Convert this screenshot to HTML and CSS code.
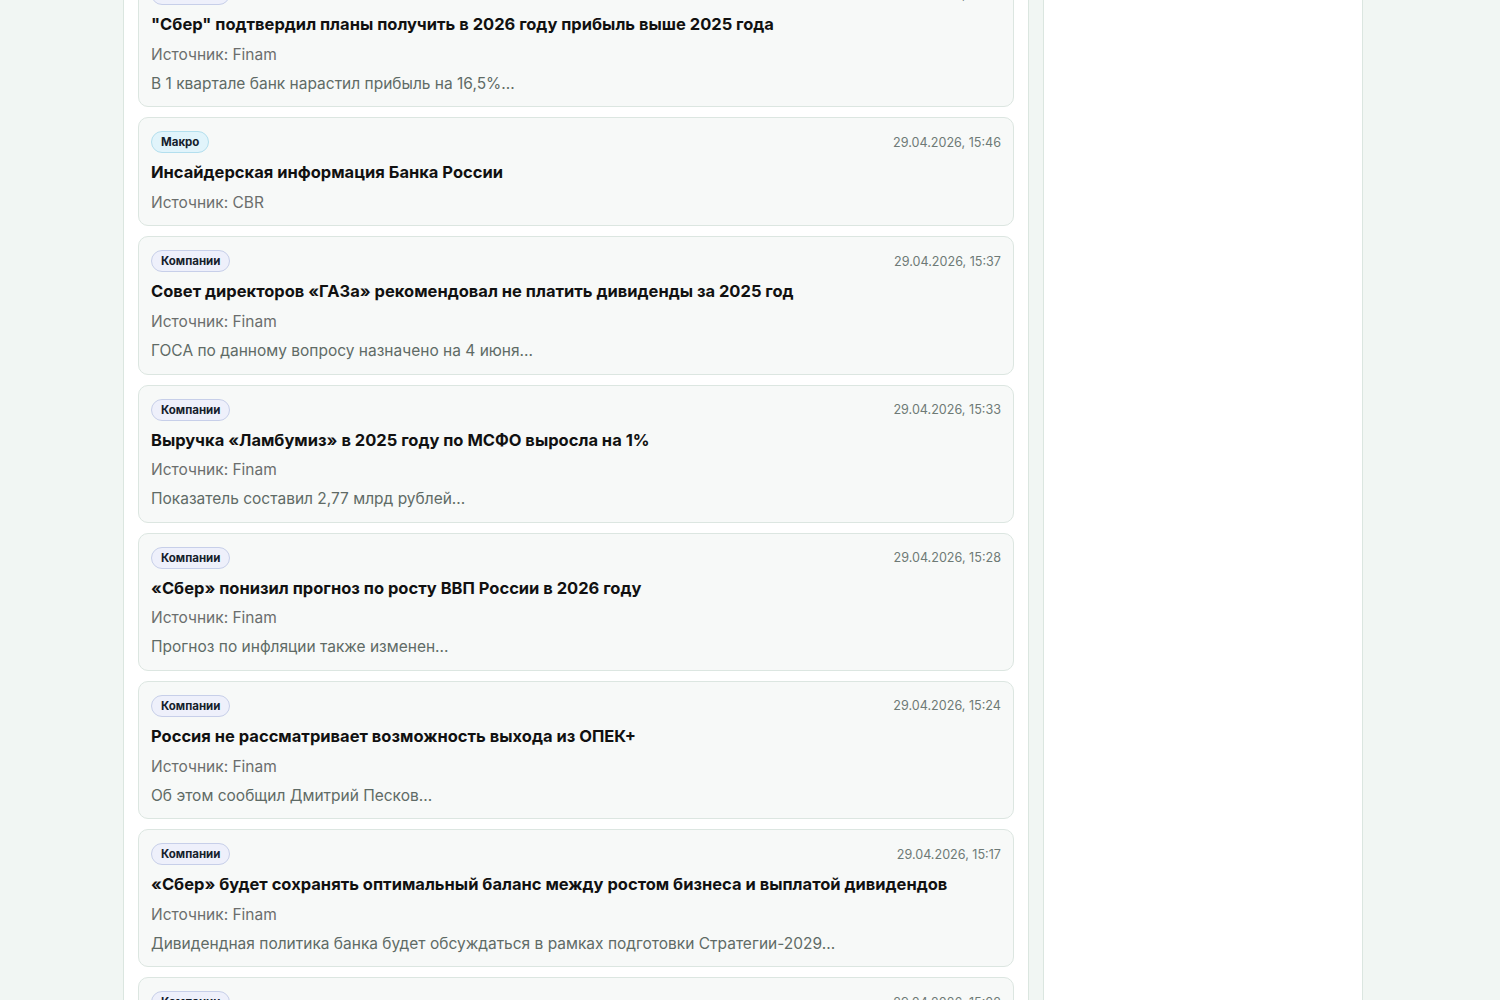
FILE: index.html
```html
<!DOCTYPE html>
<html lang="ru">
<head>
  <meta charset="UTF-8">
  <meta name="viewport" content="width=device-width, initial-scale=1.0">
  <title>Новости</title>
  <link rel="stylesheet" href="styles.css">
</head>
<body>

  <div class="layout">
    <main class="feed">
      <div class="news-list">

        <div class="news-card">
          <div class="news-head">
            <span class="tag tag-companies">Компании</span>
            <span class="news-date">29.04.2026, 15:52</span>
          </div>
          <div class="news-title">"Сбер" подтвердил планы получить в 2026 году прибыль выше 2025 года</div>
          <div class="news-source">Источник: Finam</div>
          <div class="news-text">В 1 квартале банк нарастил прибыль на 16,5%...</div>
        </div>

        <div class="news-card">
          <div class="news-head">
            <span class="tag tag-macro">Макро</span>
            <span class="news-date">29.04.2026, 15:46</span>
          </div>
          <div class="news-title">Инсайдерская информация Банка России</div>
          <div class="news-source">Источник: CBR</div>
        </div>

        <div class="news-card">
          <div class="news-head">
            <span class="tag tag-companies">Компании</span>
            <span class="news-date">29.04.2026, 15:37</span>
          </div>
          <div class="news-title">Совет директоров «ГАЗа» рекомендовал не платить дивиденды за 2025 год</div>
          <div class="news-source">Источник: Finam</div>
          <div class="news-text">ГОСА по данному вопросу назначено на 4 июня...</div>
        </div>

        <div class="news-card">
          <div class="news-head">
            <span class="tag tag-companies">Компании</span>
            <span class="news-date">29.04.2026, 15:33</span>
          </div>
          <div class="news-title">Выручка «Ламбумиз» в 2025 году по МСФО выросла на 1%</div>
          <div class="news-source">Источник: Finam</div>
          <div class="news-text">Показатель составил 2,77 млрд рублей...</div>
        </div>

        <div class="news-card">
          <div class="news-head">
            <span class="tag tag-companies">Компании</span>
            <span class="news-date">29.04.2026, 15:28</span>
          </div>
          <div class="news-title">«Сбер» понизил прогноз по росту ВВП России в 2026 году</div>
          <div class="news-source">Источник: Finam</div>
          <div class="news-text">Прогноз по инфляции также изменен...</div>
        </div>

        <div class="news-card">
          <div class="news-head">
            <span class="tag tag-companies">Компании</span>
            <span class="news-date">29.04.2026, 15:24</span>
          </div>
          <div class="news-title">Россия не рассматривает возможность выхода из ОПЕК+</div>
          <div class="news-source">Источник: Finam</div>
          <div class="news-text">Об этом сообщил Дмитрий Песков...</div>
        </div>

        <div class="news-card">
          <div class="news-head">
            <span class="tag tag-companies">Компании</span>
            <span class="news-date">29.04.2026, 15:17</span>
          </div>
          <div class="news-title">«Сбер» будет сохранять оптимальный баланс между ростом бизнеса и выплатой дивидендов</div>
          <div class="news-source">Источник: Finam</div>
          <div class="news-text">Дивидендная политика банка будет обсуждаться в рамках подготовки Стратегии-2029...</div>
        </div>

        <div class="news-card">
          <div class="news-head">
            <span class="tag tag-companies">Компании</span>
            <span class="news-date">29.04.2026, 15:02</span>
          </div>
          <div class="news-title">Чистая прибыль «Сбера» по МСФО в 1 квартале выросла</div>
          <div class="news-source">Источник: Finam</div>
          <div class="news-text">Рентабельность капитала составила 23%...</div>
        </div>

      </div>
    </main>

    <aside class="sidebar"></aside>
  </div>

</body>
</html>
```

FILE: styles.css
```css
body {
  font-family: Inter, "Noto Sans", Arial, sans-serif;
  background-color: #f1f6f3;
  margin: 0;
  height: 100vh;
  overflow: hidden;
}
.layout {
  display: flex;
  align-items: stretch;
  gap: 14px;
  padding-left: 123px;
  margin-top: -31px;
  height: calc(100vh + 31px);
}
.feed {
  width: 876px;
  padding: 0 14px;
  background-color: #fff;
  border-left: 1px solid #dbe6e0;
  border-right: 1px solid #dbe6e0;
  overflow: hidden;
}
.sidebar {
  width: 318px;
  background-color: #fff;
  border-left: 1px solid #dbe6e0;
  border-right: 1px solid #dbe6e0;
}
.news-list {
  display: flex;
  flex-direction: column;
  gap: 10px;
}
.news-card {
  background-color: #f7f9f8;
  border: 1px solid #dce6e1;
  border-radius: 10px;
  padding: 12px 12px 11.6px;
}
.news-head {
  display: flex;
  justify-content: space-between;
  align-items: center;
  height: 24px;
}
.tag {
  font-size: 11.5px;
  font-weight: 700;
  color: #15202b;
  padding: 2px 9px;
  line-height: 16px;
  border-radius: 11px;
  border: 1px solid;
}
.tag-companies {
  background-color: #eef0fb;
  border-color: #c7cfe9;
}
.tag-macro {
  background-color: #e1f4fb;
  border-color: #b3dfee;
}
.news-date {
  font-size: 12.6px;
  color: #6e7a76;
}
.news-title {
  margin-top: 7px;
  font-size: 16.5px;
  font-weight: 700;
  line-height: 22px;
  color: #111;
}
.news-source {
  margin-top: 8.6px;
  font-size: 15.5px;
  line-height: 22px;
  color: #6b6e6d;
}
.news-text {
  margin-top: 7px;
  font-size: 15.5px;
  line-height: 22px;
  color: #5f6b66;
}
```
